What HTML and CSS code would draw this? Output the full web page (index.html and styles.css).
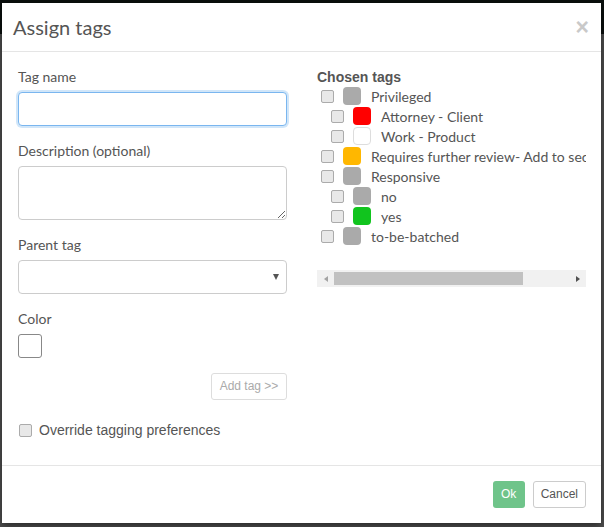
FILE: index.html
```html
<!DOCTYPE html>
<html lang="en">
<head>
    <meta charset="UTF-8">
    <meta name="viewport" content="width=device-width, initial-scale=1.0">
    <title>Assign tags</title>
    <link rel="stylesheet" href="styles.css">
</head>
<body>
    <div class="modal">
        <div class="modal-header">
            <h4 class="modal-title">Assign tags</h4>
            <button class="close" type="button">&times;</button>
        </div>

        <div class="modal-body">
            <div class="col-form">
                <label class="field-label" for="tagName">Tag name</label>
                <input type="text" id="tagName" class="form-control focused">

                <label class="field-label" for="tagDesc">Description (optional)</label>
                <textarea id="tagDesc" class="form-control desc"></textarea>

                <label class="field-label" for="parentTag">Parent tag</label>
                <div class="select-wrap">
                    <select id="parentTag" class="form-control"></select>
                    <span class="select-arrow"></span>
                </div>

                <label class="field-label">Color</label>
                <div class="color-swatch"></div>

                <div class="add-row">
                    <button class="btn btn-add" type="button" disabled>Add tag &gt;&gt;</button>
                </div>

                <label class="override">
                    <input type="checkbox" class="chk">
                    <span>Override tagging preferences</span>
                </label>
            </div>

            <div class="col-tags">
                <div class="tags-title">Chosen tags</div>
                <ul class="tag-list">
                    <li class="tag"><input type="checkbox" class="chk"><span class="dot" style="background:#aaaaaa"></span>Privileged</li>
                    <li class="tag child"><input type="checkbox" class="chk"><span class="dot" style="background:#ff0000"></span>Attorney - Client</li>
                    <li class="tag child"><input type="checkbox" class="chk"><span class="dot white" style="background:#ffffff"></span>Work - Product</li>
                    <li class="tag"><input type="checkbox" class="chk"><span class="dot" style="background:#ffb700"></span>Requires further review- Add to secondary review set</li>
                    <li class="tag"><input type="checkbox" class="chk"><span class="dot" style="background:#aaaaaa"></span>Responsive</li>
                    <li class="tag child"><input type="checkbox" class="chk"><span class="dot" style="background:#aaaaaa"></span>no</li>
                    <li class="tag child"><input type="checkbox" class="chk"><span class="dot" style="background:#11c41e"></span>yes</li>
                    <li class="tag"><input type="checkbox" class="chk"><span class="dot" style="background:#aaaaaa"></span>to-be-batched</li>
                </ul>
                <div class="hscroll">
                    <span class="hs-btn"><span class="arrow-left"></span></span>
                    <div class="hs-track"><div class="hs-thumb"></div></div>
                    <span class="hs-btn"><span class="arrow-right"></span></span>
                </div>
            </div>
        </div>

        <div class="modal-footer">
            <button class="btn btn-ok" type="button">Ok</button>
            <button class="btn btn-cancel" type="button">Cancel</button>
        </div>
    </div>
</body>
</html>
```

FILE: styles.css
```css
html, body {
    margin: 0;
    padding: 0;
}
body {
    width: 604px;
    height: 527px;
    overflow: hidden;
    background: linear-gradient(to bottom, #0a0f0d 0, #0a0f0d 34px, #505050 34px);
    font-family: Lato, "Open Sans", sans-serif;
    color: #555;
}
.modal {
    margin: 3px 0 0 2px;
    width: 599px;
    height: 520px;
    background-color: #fff;
    display: flex;
    flex-direction: column;
    box-shadow: 0 3px 9px rgba(0, 0, 0, 0.5);
}
.modal-header {
    height: 48px;
    border-bottom: 1px solid #e5e5e5;
    display: flex;
    align-items: center;
    justify-content: space-between;
    padding: 0 12px 0 11px;
}
.modal-title {
    margin: 0;
    font-weight: normal;
    font-size: 20px;
    color: #555;
}
.close {
    border: none;
    background: none;
    padding: 0;
    font-family: "Liberation Sans", Arial, sans-serif;
    font-size: 23px;
    font-weight: bold;
    color: #c9c9c9;
    line-height: 1;
    cursor: pointer;
}
.modal-body {
    flex: 1;
    display: flex;
    gap: 30px;
    padding: 15px 15px 0 16px;
}
.col-form,
.col-tags {
    width: 269px;
    display: flex;
    flex-direction: column;
}
.field-label {
    display: block;
    font-size: 14px;
    line-height: 20px;
    margin-bottom: 5px;
}
.form-control {
    box-sizing: border-box;
    width: 100%;
    height: 34px;
    margin: 0 0 15px;
    padding: 6px 10px;
    border: 1px solid #ccc;
    border-radius: 4px;
    background: #fff;
    font: inherit;
    color: #555;
}
.form-control.focused {
    border-color: #7ab6ef;
    box-shadow: 0 0 0 2px rgba(122, 182, 239, 0.35);
    outline: none;
}
.form-control.desc {
    height: 54px;
    resize: vertical;
}
.select-wrap {
    position: relative;
}
.select-wrap select {
    appearance: none;
    -webkit-appearance: none;
}
.select-arrow {
    position: absolute;
    right: 8px;
    top: 14px;
    width: 0;
    height: 0;
    border-left: 3.5px solid transparent;
    border-right: 3.5px solid transparent;
    border-top: 6px solid #555;
}
.color-swatch {
    width: 22px;
    height: 22px;
    border: 1px solid #888;
    border-radius: 3px;
}
.add-row {
    display: flex;
    justify-content: flex-end;
    margin-top: 15px;
}
.btn {
    font-family: "Liberation Sans", Arial, sans-serif;
    font-size: 12px;
    line-height: 15px;
    padding: 5px 8px;
    border-radius: 3px;
    border: 1px solid transparent;
    cursor: pointer;
}
.btn-add {
    background: #fff;
    border-color: #ddd;
    color: #aaa;
    width: 76px;
    padding: 5px 0;
}
.override {
    display: flex;
    align-items: center;
    margin-top: 20px;
    font-family: "Liberation Sans", Arial, sans-serif;
    font-size: 14px;
    line-height: 20px;
}
.override .chk {
    margin: 0 7px 0 1px;
}
.chk {
    appearance: none;
    -webkit-appearance: none;
    box-sizing: border-box;
    width: 13px;
    height: 13px;
    margin: 0;
    border: 1px solid #ababab;
    border-radius: 2px;
    background: #e8e8e8;
    flex: none;
}
.tags-title {
    font-family: "Liberation Sans", Arial, sans-serif;
    font-weight: bold;
    font-size: 14px;
    line-height: 20px;
}
.tag-list {
    list-style: none;
    margin: -1px 0 0;
    padding: 0 0 24px;
    overflow: hidden;
}
.tag {
    display: flex;
    align-items: center;
    height: 20px;
    font-size: 14px;
    white-space: nowrap;
    padding-left: 4px;
}
.tag.child {
    padding-left: 14px;
}
.tag .chk {
    margin-right: 9px;
}
.dot {
    box-sizing: border-box;
    width: 18px;
    height: 18px;
    border-radius: 4px;
    margin-right: 10px;
    flex: none;
}
.dot.white {
    border: 1px solid #ddd;
}
.hscroll {
    display: flex;
    height: 17px;
    background: #f1f1f1;
}
.hs-btn {
    width: 17px;
    display: flex;
    align-items: center;
    justify-content: center;
}
.arrow-left {
    border-top: 3.5px solid transparent;
    border-bottom: 3.5px solid transparent;
    border-right: 4px solid #a3a3a3;
}
.arrow-right {
    border-top: 3.5px solid transparent;
    border-bottom: 3.5px solid transparent;
    border-left: 4px solid #505050;
}
.hs-track {
    flex: 1;
    padding: 2px 0;
}
.hs-thumb {
    width: 189px;
    height: 13px;
    background: #c1c1c1;
}
.modal-footer {
    border-top: 1px solid #e5e5e5;
    padding: 15px 15px 15px;
    display: flex;
    justify-content: flex-end;
    gap: 8px;
}
.btn-ok {
    background: #6fc48a;
    color: #fff;
    width: 32px;
    padding: 5px 0;
}
.btn-cancel {
    background: #fff;
    border-color: #ccc;
    color: #555;
    padding: 5px 7px;
}
```
